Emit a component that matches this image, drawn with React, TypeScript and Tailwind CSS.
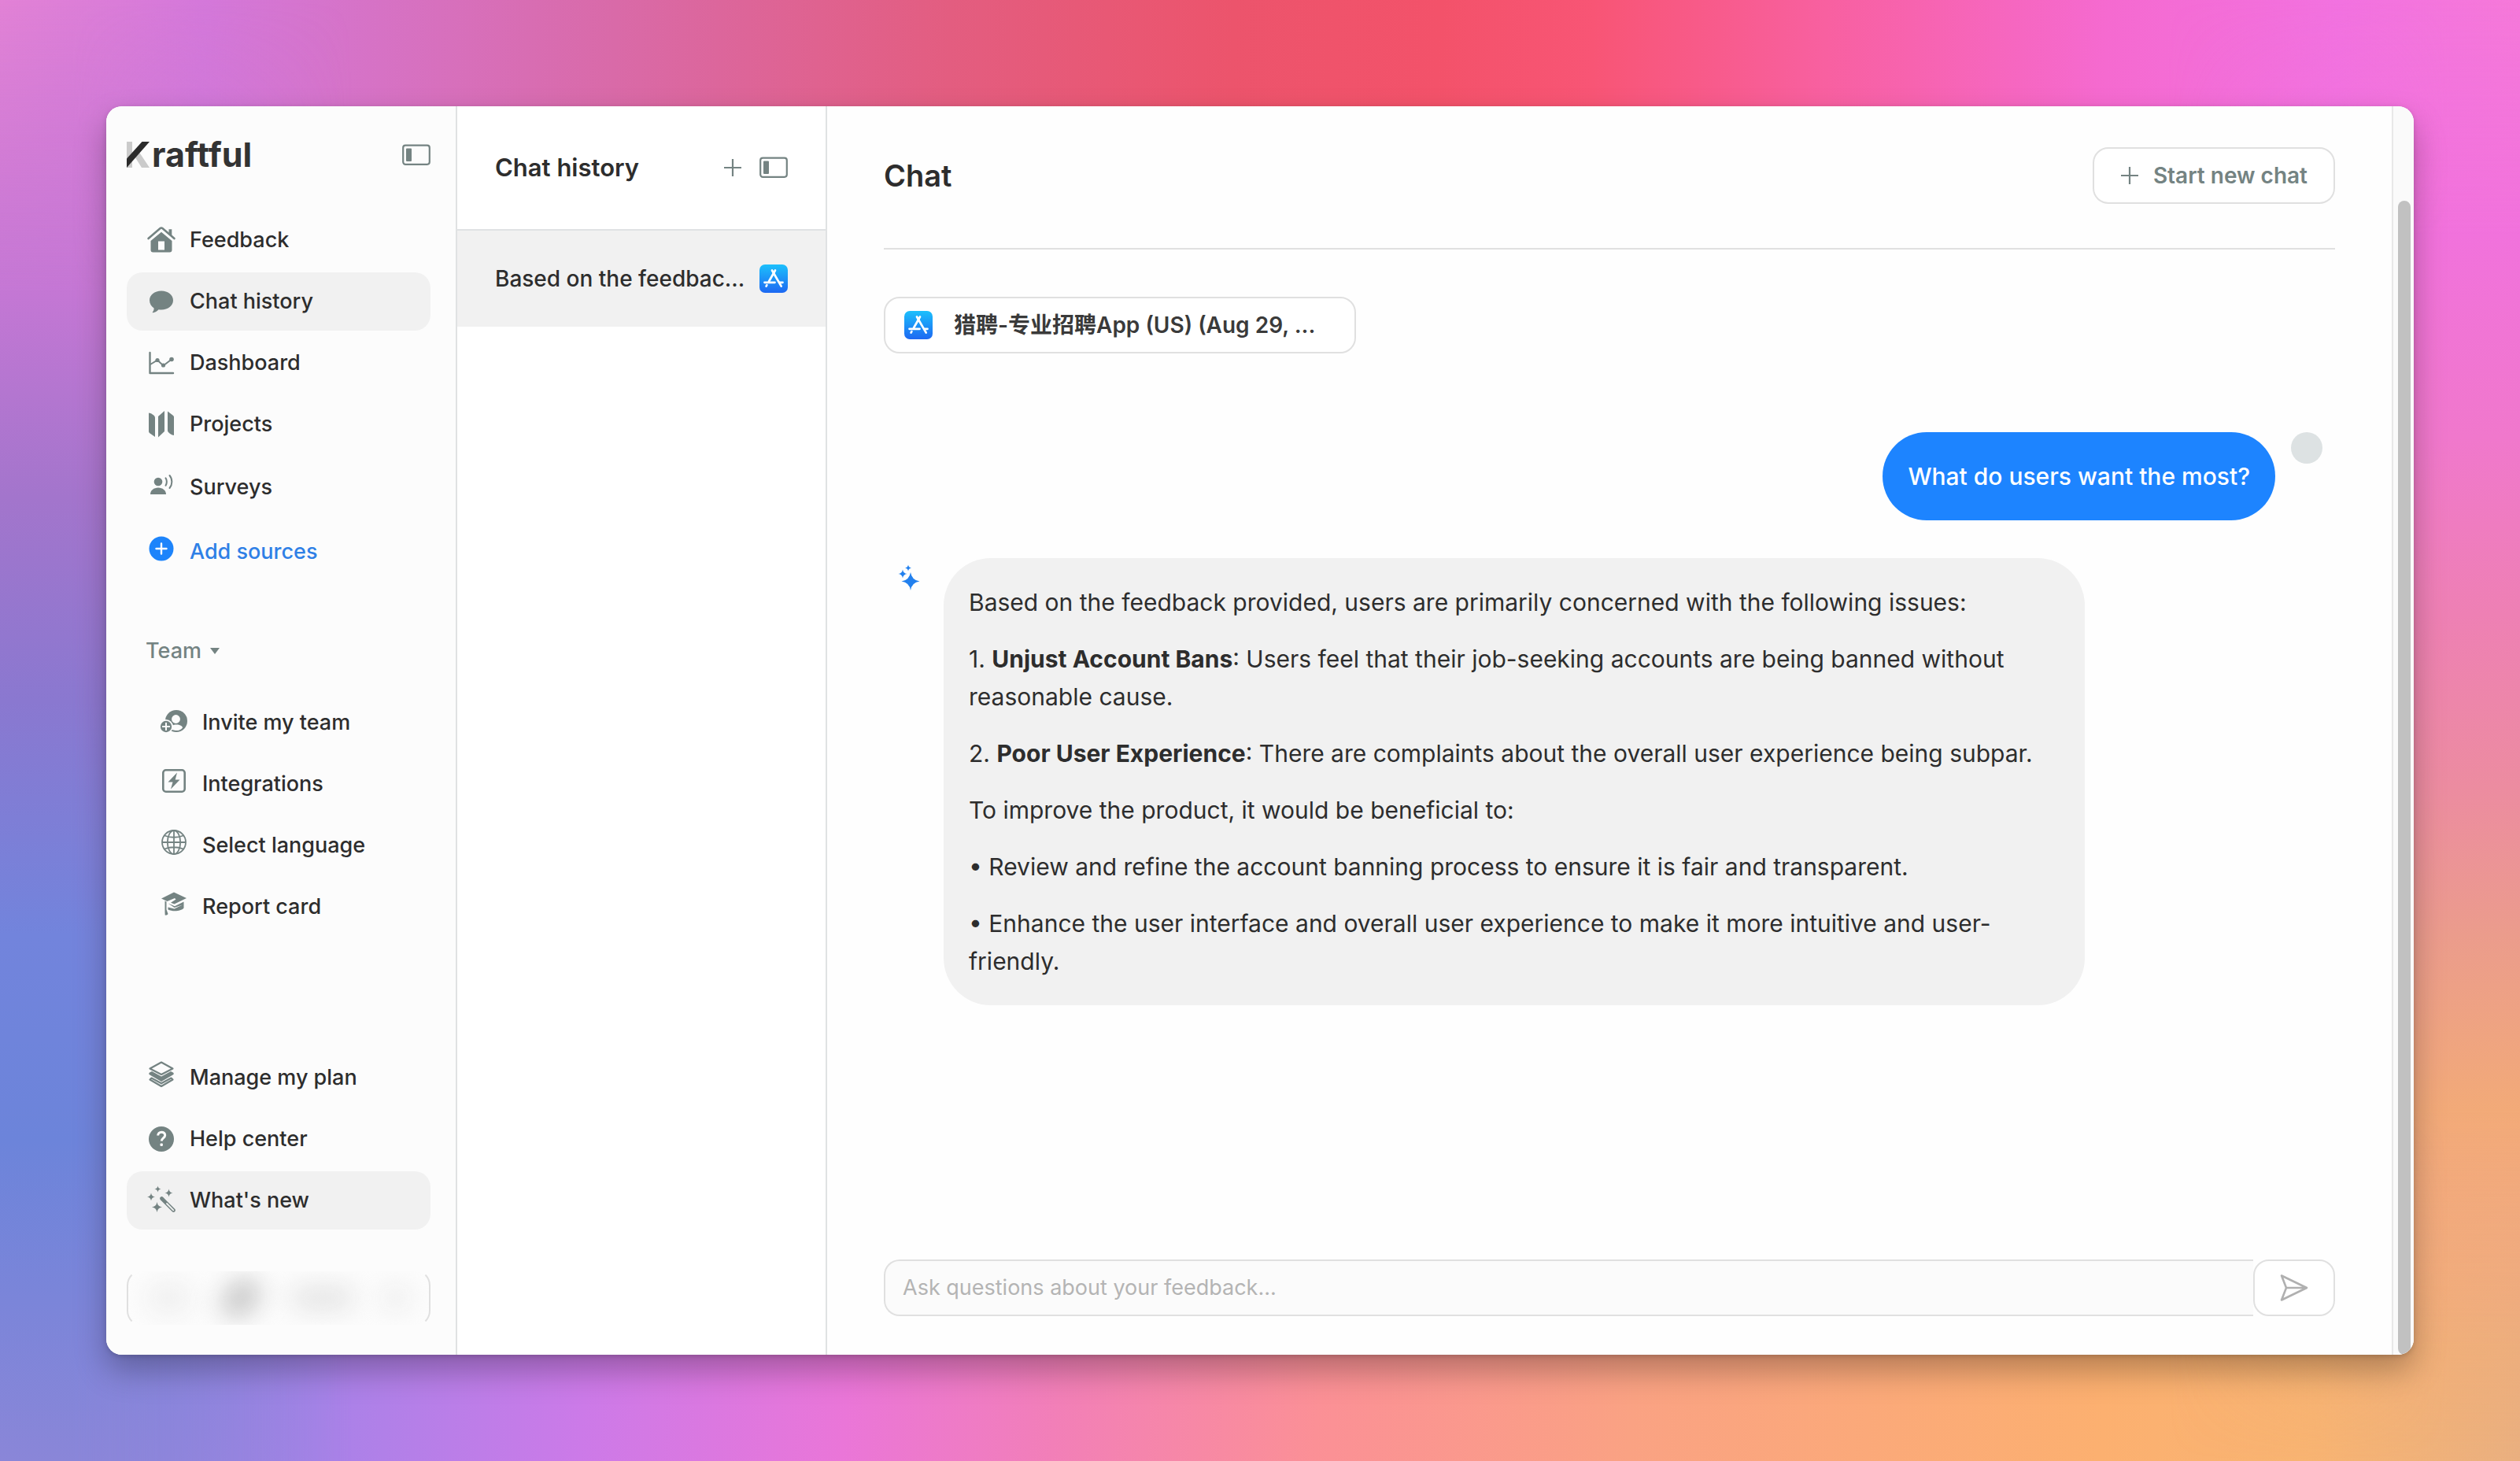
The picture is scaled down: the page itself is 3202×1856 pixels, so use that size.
import type { ReactNode } from "react";

const iconBox = "h-9 w-9 shrink-0 text-[#748382]";

function Icon({ y = 0, className = "", children }: { y?: number; className?: string; children: ReactNode }) {
  return (
    <svg viewBox={`0 ${y} 36 36`} fill="currentColor" aria-hidden="true" className={`${iconBox} overflow-visible ${className}`}>
      {children}
    </svg>
  );
}

const star = (x: number, y: number, r: number, pinch = 0.13) => {
  const k = r * pinch;
  return `M${x} ${y - r}Q${x + k} ${y - k} ${x + r} ${y}Q${x + k} ${y + k} ${x} ${y + r}Q${x - k} ${y + k} ${x - r} ${y}Q${x - k} ${y - k} ${x} ${y - r}Z`;
};

const HomeIcon = () => (
  <Icon>
    <path d="M1.500 16 16.600 3.100a2.200 2.200 0 0 1 2.800 0L34.500 16" fill="none" stroke="currentColor" strokeWidth="2.600" strokeLinecap="round" />
    <path d="M27.500 4.300h3.800v8.200l-3.800-3.200z" />
    <path fillRule="evenodd" d="M18 7.800 31.500 19V30.500a3 3 0 0 1-3 3h-21a3 3 0 0 1-3-3V19ZM14 19.500V30.500h8V19.500Z" />
  </Icon>
);

const BubbleIcon = () => (
  <Icon>
    <path d="M18 4.500c8.500 0 15 5.300 15 12s-6.500 12-15 12c-1.200 0-2.300 0-3.400-.3C12.500 30.500 10 32 7.400 32.200c-.6 0-.8-.6-.4-1 1.200-1.200 1.700-2.800 1.600-4.700C5.200 24.300 3 20.700 3 16.500c0-6.700 6.500-12 15-12Z" />
  </Icon>
);

const ChartIcon = () => (
  <Icon>
    <path d="M3.500 5V31H33" fill="none" stroke="currentColor" strokeWidth="2.400" strokeLinecap="round" strokeLinejoin="round" />
    <path d="M4 20 13 14.500 20.500 21.500 31 13.500" fill="none" stroke="currentColor" strokeWidth="2" />
    <circle cx="13" cy="14.500" r="2.600" />
    <circle cx="20.500" cy="21" r="2.600" />
    <circle cx="31" cy="13.500" r="2.800" />
  </Icon>
);

const ProjectsIcon = () => (
  <Icon>
    <path d="M2 3.500C4 3.500 10 6.500 10 9.500V34L3.500 29.500C2.500 28.800 2 28 2 27Z" />
    <path d="M14 8 22 1V27L14 34.500Z" />
    <path d="M26 1.500 32.500 6.500C33.500 7.300 34 8 34 9V32C31.500 32 26 28.500 26 26Z" />
  </Icon>
);

const SurveysIcon = () => (
  <Icon y={3}>
    <circle cx="14" cy="14" r="5.300" />
    <path d="M4 30c0-5 4.500-8.500 10-8.500S24 25 24 30Z" />
    <path d="M23.500 9.300c1.800 2.500 1.800 7 0 9.500M28.500 6c3.800 4.500 3.800 11.500 0 16" fill="none" stroke="currentColor" strokeWidth="2" strokeLinecap="round" />
  </Icon>
);

const AddIcon = () => (
  <Icon y={4}>
    <circle cx="18" cy="18" r="15.500" fill="#1d84fb" />
    <path d="M18 11.500v13M11.500 18h13" stroke="#fff" strokeWidth="2.400" strokeLinecap="round" />
  </Icon>
);

const InviteIcon = () => (
  <Icon y={1}>
    <circle cx="21" cy="17" r="14" />
    <circle cx="20.500" cy="14.500" r="5.400" fill="#fcfcfc" />
    <path d="M13 27.500c0-4 3.500-6 8-6s8 2 8 4c-2.500 3-6 4-9 3.500Z" fill="#fcfcfc" />
    <circle cx="8" cy="24" r="9" fill="#fcfcfc" />
    <circle cx="8" cy="24" r="7.200" />
    <path d="M8 19.800v8.400M3.800 24h8.400" stroke="#fcfcfc" strokeWidth="2" strokeLinecap="round" />
  </Icon>
);

const IntegrationsIcon = () => (
  <Icon y={4}>
    <rect x="4.300" y="4.300" width="27.400" height="27.400" rx="3.500" fill="none" stroke="currentColor" strokeWidth="2.600" />
    <path d="M22 7.500 10.500 19.500H16.500L14 28.500 25.500 16.500H19.700Z" />
  </Icon>
);

const GlobeIcon = () => (
  <Icon y={4}>
    <g fill="none" stroke="currentColor" strokeWidth="1.800">
      <circle cx="18" cy="18" r="15" />
      <ellipse cx="18" cy="18" rx="8.200" ry="15" />
      <path d="M18 3V33M3 18H33M6 9.500q12 4.500 24 0M6 26.500q12-4.500 24 0" />
    </g>
  </Icon>
);

const CapIcon = () => (
  <Icon y={4}>
    <path d="M2 11.500 18 3.500 34 11 18.500 18.500 14 16.800 20.500 12.500 19 11 9.500 15Z" />
    <path d="M6.500 14.500 8.500 15.500V25.500L10.500 31c-.8 1.800-2.800 1.800-3.800 1.500L6.500 28Z" />
    <path d="M10.500 17.500 19 21.300 30.500 15.500V23.500C27 27.800 16.500 28.500 10.500 25.500V22.500L18.500 24.500 29 19.500 18.500 23Z" />
  </Icon>
);

const LayersIcon = () => (
  <Icon y={4}>
    <path d="M5.500 22.500 3.500 24.500 18 33 32.500 24.500 30.500 22.500 18 29.300Z" fill="#fcfcfc" stroke="currentColor" strokeWidth="2.200" strokeLinejoin="round" />
    <path d="M3 15.500 6 14 18 20.500 30 14 33 15.500C34 16.500 34 17.500 33 18.300L18 27 3 18.300C2 17.500 2 16.500 3 15.500Z" />
    <path d="M18 2.500 32.500 10.500 18 18 3.500 10.500Z" fill="#fcfcfc" stroke="currentColor" strokeWidth="2.200" strokeLinejoin="round" />
  </Icon>
);

const HelpIcon = () => (
  <Icon>
    <circle cx="18" cy="18" r="16" />
    <path d="M13.700 13.500c0-2.700 2-4.300 4.500-4.300s4.500 1.500 4.500 4c0 3.300-4.400 3.500-4.400 7.300" fill="none" stroke="#fcfcfc" strokeWidth="3" />
    <rect x="16.500" y="23.500" width="3.400" height="3.400" rx="1" fill="#fcfcfc" />
  </Icon>
);

const WandIcon = () => (
  <Icon y={2}>
    <path d={star(13.500, 5.500, 4)} />
    <path d={star(27.500, 10.500, 5)} />
    <path d={star(5, 15.500, 5)} />
    <path d={star(12.500, 28.500, 6.500)} />
    <path d="M18.500 17.500 33.500 32.500" stroke="currentColor" strokeWidth="4.600" strokeLinecap="round" />
    <path d="M25 24 33.300 32.300" stroke="#f1f1f1" strokeWidth="1.800" strokeLinecap="round" />
  </Icon>
);

const PanelIcon = () => (
  <svg viewBox="0 0 36 28" className="h-7 w-9 text-[#748382]" aria-hidden="true">
    <rect x="1.200" y="1.700" width="33.600" height="24.100" rx="3" fill="none" stroke="currentColor" strokeWidth="2.200" />
    <rect x="5" y="5.500" width="7" height="16.500" rx="1" fill="currentColor" />
  </svg>
);

const PlusIcon = () => (
  <svg viewBox="0 0 24 24" className="h-6 w-6 shrink-0 text-[#748382]" aria-hidden="true">
    <path d="M12 1V23M1 12H23" stroke="currentColor" strokeWidth="2.200" />
  </svg>
);

const AppStoreIcon = () => (
  <svg viewBox="0 0 36 36" className="h-9 w-9 shrink-0" aria-hidden="true">
    <defs>
      <linearGradient id="store" x1="0" y1="0" x2="0" y2="1">
        <stop offset="0" stopColor="#1cc0fc" />
        <stop offset="1" stopColor="#1d68f2" />
      </linearGradient>
    </defs>
    <rect width="36" height="36" rx="7" fill="url(#store)" />
    <g stroke="#fff" strokeWidth="2.700" strokeLinecap="round">
      <path d="M20 7.500 12 21.500M9.400 26.200 8.600 27.600" />
      <path d="M16 7.500 27.700 27.600" />
      <path d="M6.500 22.800H19.500M25.500 22.800H29.500" />
    </g>
  </svg>
);

type Item = { label: string; icon: ReactNode; active?: boolean; tall?: boolean; accent?: boolean };

const mainItems: Item[] = [
  { label: "Feedback", icon: <HomeIcon /> },
  { label: "Chat history", icon: <BubbleIcon />, active: true },
  { label: "Dashboard", icon: <ChartIcon /> },
  { label: "Projects", icon: <ProjectsIcon /> },
  { label: "Surveys", icon: <SurveysIcon />, tall: true },
  { label: "Add sources", icon: <AddIcon />, tall: true, accent: true },
];

const teamItems: Item[] = [
  { label: "Invite my team", icon: <InviteIcon /> },
  { label: "Integrations", icon: <IntegrationsIcon /> },
  { label: "Select language", icon: <GlobeIcon /> },
  { label: "Report card", icon: <CapIcon /> },
];

const footerItems: Item[] = [
  { label: "Manage my plan", icon: <LayersIcon /> },
  { label: "Help center", icon: <HelpIcon /> },
  { label: "What's new", icon: <WandIcon />, active: true },
];

function NavList({ items, inset = false }: { items: Item[]; inset?: boolean }) {
  return (
    <ul className="flex flex-col gap-1">
      {items.map(({ label, icon, active, tall, accent }) => (
        <li key={label}>
          <a
            href="#"
            className={[
              "flex items-center gap-[18px] rounded-[20px] text-[27px] font-medium",
              inset ? "pl-[42px]" : "pl-[26px]",
              tall ? "h-[78px]" : "h-[74px]",
              active ? "bg-[#f1f1f1]" : "",
              accent ? "text-[#2f80e6]" : "",
            ].join(" ")}
          >
            {icon}
            {label}
          </a>
        </li>
      ))}
    </ul>
  );
}

function Sidebar() {
  return (
    <aside className="flex w-[446px] shrink-0 flex-col border-r-2 border-[#e0e2e3] bg-[#fcfcfc] pr-8 pb-9 pl-[26px]">
      <div className="mb-[10px] flex h-[123px] items-center justify-between">
        <div className="flex items-center gap-[2px]">
          <svg viewBox="0 0 30 34" className="h-[34px] w-[30px]" aria-hidden="true">
            <path d="M0 0H7V33H0ZM9 17 15 12 29 33H19Z" fill="#cbcbcb" />
            <path d="M19.500 0H29L0 33V21.500Z" fill="#2b2b2b" />
          </svg>
          <span className="text-[43px] leading-none font-bold text-[#333]">raftful</span>
        </div>
        <button type="button" aria-label="Collapse sidebar">
          <PanelIcon />
        </button>
      </div>
      <nav aria-label="Main" className="flex flex-1 flex-col">
        <NavList items={mainItems} />
        <button type="button" className="mt-[67px] mb-[34px] flex items-center gap-[10px] pl-6 text-[27px] leading-[40px] font-medium text-[#748382]">
          Team
          <svg viewBox="0 0 14 10" className="h-[10px] w-[14px]" aria-hidden="true">
            <path d="M1 1H13L7 9Z" fill="currentColor" />
          </svg>
        </button>
        <NavList items={teamItems} inset />
        <div className="mt-auto">
          <NavList items={footerItems} />
        </div>
      </nav>
      <button
        type="button"
        aria-label="Account"
        className="mt-[51px] flex h-[72px] items-center justify-between overflow-hidden rounded-[20px] border-2 border-x-[#e0e0e0] border-y-transparent px-6"
      >
        <span className="h-10 w-14 rounded-full bg-[#efefef] blur-lg" />
        <span className="h-10 w-14 -rotate-45 rounded-full bg-[#c8c8c8] blur-lg" />
        <span className="h-7 w-20 rounded-full bg-[#e2e2e2] blur-lg" />
        <span className="h-7 w-9 rounded-full bg-[#ebebeb] blur-lg" />
      </button>
    </aside>
  );
}

function HistoryColumn() {
  return (
    <section aria-label="Chat history" className="flex w-[470px] shrink-0 flex-col border-r-2 border-[#e0e2e3]">
      <header className="flex h-[158px] items-center gap-[22px] border-b-2 border-[#dfe2e4] px-12">
        <h2 className="flex-1 text-[31px] font-semibold">Chat history</h2>
        <button type="button" aria-label="New chat">
          <PlusIcon />
        </button>
        <button type="button" aria-label="Collapse chat history">
          <PanelIcon />
        </button>
      </header>
      <a href="#" className="flex h-[122px] items-center justify-between bg-[#f1f1f1] px-12 text-[28px] font-medium">
        <span>Based on the feedbac...</span>
        <AppStoreIcon />
      </a>
    </section>
  );
}

function Chat() {
  return (
    <main className="flex min-w-0 flex-1 flex-col bg-[#fefefe] px-[72px] pt-[52px] pb-[49px]">
      <header className="flex items-center justify-between border-b-2 border-[#e0e0e0] pb-14">
        <h1 className="text-[38px] font-semibold">Chat</h1>
        <button
          type="button"
          className="flex h-[72px] items-center gap-[18px] rounded-[20px] border-2 border-[#e0e0e0] bg-white px-[33px] text-[28px] font-semibold text-[#748382]"
        >
          <PlusIcon />
          Start new chat
        </button>
      </header>

      <button
        type="button"
        className="mt-[60px] flex h-[72px] w-[600px] items-center gap-[27px] rounded-[20px] border-2 border-[#e0e0e0] bg-white px-6 text-[28px] font-semibold text-[#3a3a3a]"
      >
        <AppStoreIcon />
        猎聘-专业招聘App (US) (Aug 29, ...
      </button>

      <div className="mt-[100px] flex items-start justify-end gap-5 pr-4">
        <p className="rounded-[56px] bg-[#1d84ff] p-8 text-[30px] leading-[48px] font-medium text-white">What do users want the most?</p>
        <span className="h-10 w-10 rounded-full bg-[#dde2e3]" />
      </div>

      <div className="mt-12 flex items-start">
        <div className="w-[76px] shrink-0 pt-2 pl-[18px]">
          <svg viewBox="0 0 28 34" className="h-[34px] w-7" fill="#2280ee" aria-hidden="true">
            <path d={star(16, 21.500, 11.500)} />
            <path d={star(6, 12, 5.500)} />
            <path d={star(13, 4.500, 4)} />
          </svg>
        </div>
        <div className="flex w-full max-w-[1450px] flex-col gap-6 rounded-[60px] bg-[#f1f1f1] p-8 text-[30px] leading-[48px]">
          <p>Based on the feedback provided, users are primarily concerned with the following issues:</p>
          <p>
            1. <strong className="font-bold">Unjust Account Bans</strong>: Users feel that their job-seeking accounts are being banned without
            reasonable cause.
          </p>
          <p>
            2. <strong className="font-bold">Poor User Experience</strong>: There are complaints about the overall user experience being subpar.
          </p>
          <p>To improve the product, it would be beneficial to:</p>
          <p>• Review and refine the account banning process to ensure it is fair and transparent.</p>
          <p>• Enhance the user interface and overall user experience to make it more intuitive and user-friendly.</p>
        </div>
      </div>

      <form className="mt-auto flex h-[72px]" onSubmit={(e) => e.preventDefault()}>
        <input
          type="text"
          aria-label="Ask questions about your feedback"
          placeholder="Ask questions about your feedback..."
          className="min-w-0 flex-1 rounded-l-[20px] border-2 border-r-0 border-[#e0e0e0] bg-[#fbfbfb] px-[22px] text-[27px] placeholder:text-[#b4b4b4]"
        />
        <button type="submit" aria-label="Send" className="flex w-[104px] items-center justify-center rounded-[20px] border-2 border-[#e0e0e0] bg-white">
          <svg viewBox="0 0 36 36" className="h-9 w-9" fill="none" stroke="#b0b0b0" strokeWidth="2.600" strokeLinejoin="round" aria-hidden="true">
            <path d="M2 2.500 34 18 2 33.500 8 18ZM8 18H33" />
          </svg>
        </button>
      </form>
    </main>
  );
}

function Backdrop() {
  return (
    <div aria-hidden="true" className="absolute inset-0 -z-10">
      <div className="absolute inset-0 bg-[linear-gradient(92deg,#e282d6_0%,#d478da_8%,#d96aa8_24%,#e35d80_37%,#ec546c_48%,#f3526a_56%,#f85575_62%,#f860a0_71%,#f56ad0_82%,#f272e0_91%,#f77bd8_100%)]" />
      <div className="absolute inset-0 bg-[linear-gradient(94deg,#8a86d8_0%,#9484e0_10%,#a882e8_16%,#cc7ae8_26%,#ea76d8_36%,#f27fb8_44%,#fb9096_54%,#faa283_66%,#fcb070_84%,#f8b472_92%,#eab080_100%)] [mask-image:linear-gradient(to_bottom,transparent_20%,black_92%)]" />
      <div className="absolute inset-y-0 left-0 w-[14%] bg-[linear-gradient(to_bottom,transparent_0%,#c477d4_20%,#a375cc_34%,#8a78d0_48%,#7284dc_64%,#6c84da_78%,#8a86d8_100%)] [mask-image:linear-gradient(to_right,black_20%,transparent)]" />
      <div className="absolute inset-y-0 right-0 w-[14%] bg-[linear-gradient(to_bottom,transparent_0%,#f172dc_16%,#f078cc_30%,#ee80b4_42%,#ec8ca0_54%,#eb9c8c_64%,#f2aa78_76%,transparent_100%)] [mask-image:linear-gradient(to_left,black_20%,transparent)]" />
    </div>
  );
}

export default function App() {
  return (
    <div className="relative isolate flex min-h-screen p-[135px] font-['Inter','Noto_Sans_CJK_SC',sans-serif] text-[#2d2d2d]">
      <Backdrop />
      <div className="flex min-w-0 flex-1 overflow-hidden rounded-[20px] bg-white shadow-[0_20px_40px_rgba(0,0,0,0.28),0_2px_6px_rgba(0,0,0,0.15)]">
        <Sidebar />
        <HistoryColumn />
        <Chat />
        <div aria-hidden="true" className="flex w-7 shrink-0 flex-col border-l-2 border-[#e8e8e8] bg-[#fafafa] pt-[120px] pr-1 pl-[6px]">
          <div className="flex-1 rounded-lg bg-[#c1c1c1]" />
        </div>
      </div>
    </div>
  );
}
